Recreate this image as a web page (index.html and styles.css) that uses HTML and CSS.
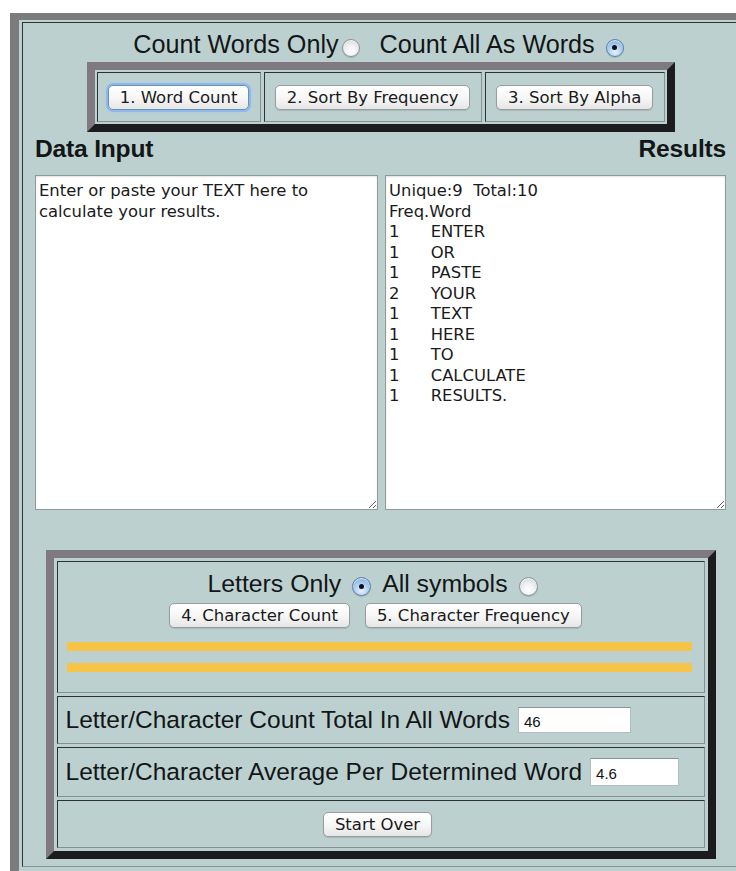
FILE: index.html
```html
<!DOCTYPE html>
<html lang="en">
<head>
<meta charset="utf-8">
<title>Word Counter</title>
<link rel="stylesheet" href="styles.css">
</head>
<body>
<div class="frame">
  <div class="frame-cell">
    <div class="mode-line top-mode">
      <label class="opt">Count Words Only<input type="radio" name="wordmode" class="radio radio-tight"></label>
      <label class="opt opt-next">Count All As Words<input type="radio" name="wordmode" class="radio" checked></label>
    </div>

    <div class="bevel btnbar">
      <div class="inset bcell"><button class="btn is-focused">1. Word Count</button></div>
      <div class="inset bcell"><button class="btn">2. Sort By Frequency</button></div>
      <div class="inset bcell"><button class="btn">3. Sort By Alpha</button></div>
    </div>

    <div class="io">
      <h2 class="io-head">Data Input</h2>
      <h2 class="io-head io-head-right">Results</h2>
      <textarea class="io-box">Enter or paste your TEXT here to calculate your results.</textarea>
      <textarea class="io-box">Unique:9  Total:10
Freq.Word
1	ENTER
1	OR
1	PASTE
2	YOUR
1	TEXT
1	HERE
1	TO
1	CALCULATE
1	RESULTS.</textarea>
    </div>

    <div class="bevel stats">
      <div class="inset scell options">
        <div class="mode-line char-mode">
          <label class="opt">Letters Only<input type="radio" name="charmode" class="radio radio-wide" checked></label>
          <label class="opt opt-near">All symbols<input type="radio" name="charmode" class="radio radio-wide"></label>
        </div>
        <div class="btn-row">
          <button class="btn">4. Character Count</button>
          <button class="btn">5. Character Frequency</button>
        </div>
        <div class="bar"></div>
        <div class="bar"></div>
      </div>
      <div class="inset scell field">
        <span>Letter/Character Count Total In All Words</span>
        <input class="num num-total" type="text" value="46">
      </div>
      <div class="inset scell field field-tall">
        <span>Letter/Character Average Per Determined Word</span>
        <input class="num num-avg" type="text" value="4.6">
      </div>
      <div class="inset scell actions">
        <button class="btn">Start Over</button>
      </div>
    </div>
  </div>
</div>
</body>
</html>
```

FILE: styles.css
```css
html, body {
  margin: 0;
  padding: 0;
  background: #ffffff;
  overflow: hidden;
}

/* outer bevelled frame, runs off the right and bottom edges of the window */
.frame {
  margin: 13px 0 0 10px;
  width: 742px;
  box-sizing: border-box;
  border-style: solid;
  border-width: 7px 9px 9px 9px;
  border-color: #7b7d7d #5c5e5e #5c5e5e #7b7d7d;
  padding: 2px 3px 8px 3px;
  background: #bdd0d0;
}

.frame-cell {
  border: 1px solid;
  border-color: #2e3434 #8a9494 #8a9494 #2e3434;
  padding: 7px 13px 7px 12px;
  font-family: "Liberation Sans", Arial, sans-serif;
  color: #121616;
}

/* shared bevel for the two inner tables */
.bevel {
  border-style: solid;
  border-width: 8px;
  border-color: #7e7a80 #1c1c1e #1c1c1e #7e7a80;
  background: #bdd0d0;
  box-sizing: border-box;
}

.inset {
  border: 1px solid;
  border-color: #2c3131 #879191 #879191 #2c3131;
  box-sizing: border-box;
}

/* radio option lines */
.mode-line {
  display: flex;
  justify-content: center;
  align-items: center;
  font-size: 25.2px;
  line-height: 29px;
  height: 29px;
}

.top-mode {
  padding-right: 4px;
}

.char-mode {
  padding-right: 16px;
  font-size: 24.8px;
}

.opt {
  display: flex;
  align-items: center;
  white-space: nowrap;
}

.opt-next {
  margin-left: 20px;
}

.opt-near {
  margin-left: 11px;
}

.radio {
  appearance: none;
  -webkit-appearance: none;
  width: 18px;
  height: 18px;
  margin: 6px 0 0 11px;
  border-radius: 50%;
  border: 1px solid #8d9396;
  background: radial-gradient(circle at 50% 70%, #ffffff 0%, #eef0f2 45%, #c9cdd1 100%);
  box-shadow: inset 0 1px 1px rgba(255,255,255,0.8), 0 1px 1px rgba(0,0,0,0.15);
  box-sizing: border-box;
  position: relative;
  flex: none;
}

.radio-tight {
  margin-left: 3px;
}

.radio-wide {
  width: 19px;
  height: 19px;
}

.radio:checked {
  border-color: #5e7fa6;
  background: radial-gradient(circle at 50% 75%, #e4f1fc 0%, #a9cdf0 50%, #6b9fd6 100%);
}

.radio:checked::after {
  content: "";
  position: absolute;
  left: 50%;
  top: 50%;
  width: 5px;
  height: 5px;
  margin: -2.5px 0 0 -2.5px;
  border-radius: 50%;
  background: #111;
}

/* push buttons */
.btn {
  font-family: "DejaVu Sans", "Lucida Grande", sans-serif;
  font-size: 16.5px;
  color: #1a1a1a;
  height: 25px;
  padding: 0 11px;
  border: 1px solid #9a9c9e;
  border-radius: 5px;
  background: linear-gradient(#ffffff 0%, #f7f7f7 50%, #e6e6e6 100%);
  box-shadow: 0 1px 1px rgba(0,0,0,0.12);
  line-height: 23px;
  white-space: nowrap;
}

.btn.is-focused {
  box-shadow: 0 0 0 2px #8db9e8, 0 0 3px 2px #a9cdf0;
  border-color: #6e8fb5;
}

/* top bar holding the three word buttons */
.btnbar {
  width: 588px;
  height: 70px;
  margin: 3px auto 0;
  padding: 2px;
  display: flex;
  gap: 3px;
}

.bcell {
  flex: 1 1 auto;
  display: flex;
  align-items: center;
  justify-content: center;
  padding: 0 9px;
}

/* input / results pair */
.io {
  display: grid;
  grid-template-columns: 343px 341px;
  column-gap: 7px;
  row-gap: 12px;
  margin-top: 3px;
}

.io-head {
  margin: 0;
  font-size: 24.6px;
  line-height: 28px;
  font-weight: bold;
  letter-spacing: -0.2px;
}

.io-head-right {
  text-align: right;
}

.io-box {
  display: block;
  width: 100%;
  height: 335px;
  box-sizing: border-box;
  margin: 0;
  padding: 5px 3px;
  border: 1px solid #8f9a9a;
  box-shadow: inset 0 1px 2px rgba(0,0,0,0.12);
  background: #ffffff;
  font-family: "DejaVu Sans", "Lucida Grande", sans-serif;
  font-size: 16.4px;
  line-height: 20.5px;
  color: #1a1a1a;
  tab-size: 8;
  overflow: hidden;
}

/* lower statistics panel */
.stats {
  width: 670px;
  margin: 40px auto 0;
  padding: 3px;
  display: flex;
  flex-direction: column;
  gap: 3px;
}

.scell {
  font-size: 24.5px;
}

.options {
  height: 132px;
  padding-top: 7px;
}

.btn-row {
  display: flex;
  justify-content: center;
  gap: 15px;
  margin-top: 5px;
  padding-right: 10px;
}

.bar {
  height: 9px;
  margin: 14px 12px 0 9px;
  background: #f6c446;
}

.bar + .bar {
  margin-top: 12px;
}

.field {
  height: 48px;
  display: flex;
  align-items: center;
  padding: 0 8px;
  white-space: nowrap;
}

.field-tall {
  height: 50px;
}

.num {
  margin-left: 8px;
  height: 26px;
  box-sizing: border-box;
  border: 1px solid #b4bcbc;
  border-top-color: #8c9494;
  background: #ffffff;
  font-family: "Liberation Sans", Arial, sans-serif;
  font-size: 15px;
  color: #111;
  padding: 2px 5px 0;
}

.num-total {
  width: 113px;
}

.num-avg {
  width: 89px;
  height: 28px;
}

.actions {
  height: 48px;
  display: flex;
  align-items: center;
  justify-content: center;
  padding-right: 6px;
}
```
